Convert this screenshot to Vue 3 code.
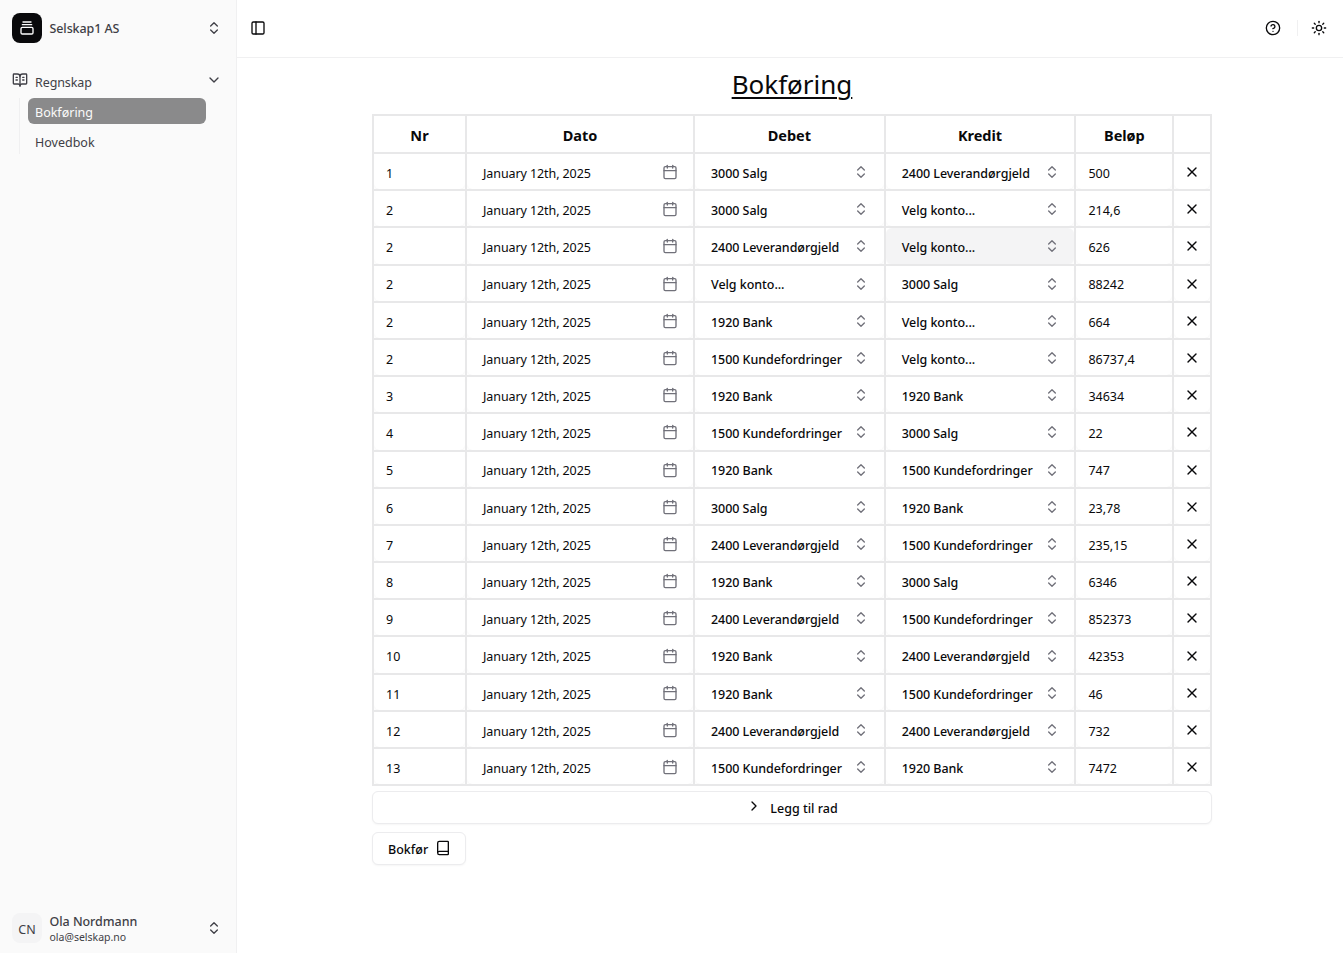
<script setup>
const accounts = {
  salg: '3000 Salg',
  lev: '2400 Leverandørgjeld',
  bank: '1920 Bank',
  kunde: '1500 Kundefordringer',
  none: 'Velg konto...'
}

const rows = [
  ['1', 'salg', 'lev', '500'],
  ['2', 'salg', 'none', '214,6'],
  ['2', 'lev', 'none', '626'],
  ['2', 'none', 'salg', '88242'],
  ['2', 'bank', 'none', '664'],
  ['2', 'kunde', 'none', '86737,4'],
  ['3', 'bank', 'bank', '34634'],
  ['4', 'kunde', 'salg', '22'],
  ['5', 'bank', 'kunde', '747'],
  ['6', 'salg', 'bank', '23,78'],
  ['7', 'lev', 'kunde', '235,15'],
  ['8', 'bank', 'salg', '6346'],
  ['9', 'lev', 'kunde', '852373'],
  ['10', 'bank', 'lev', '42353'],
  ['11', 'bank', 'kunde', '46'],
  ['12', 'lev', 'lev', '732'],
  ['13', 'kunde', 'bank', '7472']
]
</script>

<template>
  <div class="app">
    <aside class="sidebar">
      <div class="company">
        <div class="logo">
          <svg width="16" height="16" viewBox="0 0 24 24" fill="none" stroke="#fff" stroke-width="2" stroke-linecap="round" stroke-linejoin="round">
            <path d="M6 3h12" />
            <path d="M5 7h14" />
            <rect x="3" y="11" width="18" height="10" rx="2" />
          </svg>
        </div>
        <span class="company-name">Selskap1 AS</span>
        <svg class="updown dark" viewBox="0 0 24 24"><path d="m7 15 5 5 5-5" /><path d="m7 9 5-5 5 5" /></svg>
      </div>

      <div class="nav-head">
        <svg class="book-open" width="16" height="16" viewBox="0 0 24 24" fill="none" stroke="#3f3f46" stroke-width="2" stroke-linecap="round" stroke-linejoin="round">
          <path d="M12 7v14" />
          <path d="M16 12h2" />
          <path d="M16 8h2" />
          <path d="M3 18a1 1 0 0 1-1-1V4a1 1 0 0 1 1-1h5a4 4 0 0 1 4 4 4 4 0 0 1 4-4h5a1 1 0 0 1 1 1v13a1 1 0 0 1-1 1h-6a3 3 0 0 0-3 3 3 3 0 0 0-3-3z" />
          <path d="M6 12h2" />
          <path d="M6 8h2" />
        </svg>
        <span>Regnskap</span>
        <svg class="chev" width="16" height="16" viewBox="0 0 24 24" fill="none" stroke="#3f3f46" stroke-width="2" stroke-linecap="round" stroke-linejoin="round"><path d="m6 9 6 6 6-6" /></svg>
      </div>
      <div class="subnav">
        <a class="subitem active">Bokføring</a>
        <a class="subitem">Hovedbok</a>
      </div>

      <div class="user">
        <div class="avatar">CN</div>
        <div class="user-info">
          <div class="user-name">Ola Nordmann</div>
          <div class="user-mail">ola@selskap.no</div>
        </div>
        <svg class="updown dark" viewBox="0 0 24 24"><path d="m7 15 5 5 5-5" /><path d="m7 9 5-5 5 5" /></svg>
      </div>
    </aside>

    <div class="main">
      <header class="topbar">
        <svg width="16" height="16" viewBox="0 0 24 24" fill="none" stroke="#09090b" stroke-width="2" stroke-linecap="round" stroke-linejoin="round">
          <rect x="3" y="3" width="18" height="18" rx="2" />
          <path d="M9 3v18" />
        </svg>
        <div class="top-actions">
          <svg width="16" height="16" viewBox="0 0 24 24" fill="none" stroke="#09090b" stroke-width="2" stroke-linecap="round" stroke-linejoin="round">
            <circle cx="12" cy="12" r="10" />
            <path d="M9.09 9a3 3 0 0 1 5.83 1c0 2-3 3-3 3" />
            <path d="M12 17h.01" />
          </svg>
          <span class="top-sep"></span>
          <svg width="16" height="16" viewBox="0 0 24 24" fill="none" stroke="#09090b" stroke-width="2" stroke-linecap="round" stroke-linejoin="round">
            <circle cx="12" cy="12" r="4" />
            <path d="M12 2v2" /><path d="M12 20v2" />
            <path d="m4.93 4.93 1.41 1.41" /><path d="m17.66 17.66 1.41 1.41" />
            <path d="M2 12h2" /><path d="M20 12h2" />
            <path d="m6.34 17.66-1.41 1.41" /><path d="m19.07 4.93-1.41 1.41" />
          </svg>
        </div>
      </header>

      <main class="content">
        <h1 class="title">Bokføring</h1>
        <table class="ledger">
          <colgroup>
            <col class="col-nr" />
            <col class="col-date" />
            <col class="col-account" />
            <col class="col-account" />
            <col class="col-amount" />
            <col class="col-remove" />
          </colgroup>
          <thead>
            <tr>
              <th>Nr</th>
              <th>Dato</th>
              <th>Debet</th>
              <th>Kredit</th>
              <th>Beløp</th>
              <th></th>
            </tr>
          </thead>
          <tbody>
            <tr v-for="(row, i) in rows" :key="i">
              <td>
                <div class="cell plain"><span>{{ row[0] }}</span></div>
              </td>
              <td>
                <div class="cell date">
                  <span>January 12th, 2025</span>
                  <svg width="16" height="16" viewBox="0 0 24 24" fill="none" stroke="#71717a" stroke-width="2" stroke-linecap="round" stroke-linejoin="round">
                    <path d="M8 2v4" /><path d="M16 2v4" />
                    <rect x="3" y="4" width="18" height="18" rx="2" />
                    <path d="M3 10h18" />
                  </svg>
                </div>
              </td>
              <td>
                <div class="cell select">
                  <span>{{ accounts[row[1]] }}</span>
                  <svg class="updown" viewBox="0 0 24 24"><path d="m7 15 5 5 5-5" /><path d="m7 9 5-5 5 5" /></svg>
                </div>
              </td>
              <td>
                <div class="cell select" :class="{ hover: i === 2 }">
                  <span>{{ accounts[row[2]] }}</span>
                  <svg class="updown" viewBox="0 0 24 24"><path d="m7 15 5 5 5-5" /><path d="m7 9 5-5 5 5" /></svg>
                </div>
              </td>
              <td>
                <div class="cell plain"><span>{{ row[3] }}</span></div>
              </td>
              <td>
                <div class="cell remove">
                  <svg width="16" height="16" viewBox="0 0 24 24" fill="none" stroke="#09090b" stroke-width="2" stroke-linecap="round" stroke-linejoin="round">
                    <path d="M18 6 6 18" /><path d="m6 6 12 12" />
                  </svg>
                </div>
              </td>
            </tr>
          </tbody>
        </table>

        <button class="add-row">
          <svg width="16" height="16" viewBox="0 0 24 24" fill="none" stroke="#09090b" stroke-width="2" stroke-linecap="round" stroke-linejoin="round"><path d="m9 18 6-6-6-6" /></svg>
          <span>Legg til rad</span>
        </button>
        <button class="post">
          <span>Bokfør</span>
          <svg width="16" height="16" viewBox="0 0 24 24" fill="none" stroke="#09090b" stroke-width="2" stroke-linecap="round" stroke-linejoin="round">
            <path d="M4 19.5v-15A2.5 2.5 0 0 1 6.5 2H19a1 1 0 0 1 1 1v18a1 1 0 0 1-1 1H6.5a1 1 0 0 1 0-5H20" />
          </svg>
        </button>
      </main>
    </div>
  </div>
</template>

<style>
html, body {
  margin: 0;
  background: #fff;
}
</style>

<style scoped>
.app {
  display: flex;
  height: 953px;
  overflow: hidden;
  font-family: "Noto Sans", "Open Sans", sans-serif;
  font-size: 12.5px;
  color: #09090b;
}

.sidebar {
  width: 236px;
  flex-shrink: 0;
  display: flex;
  flex-direction: column;
  background: #fafafa;
  border-right: 1px solid #f0f0f1;
}

.company {
  display: flex;
  align-items: center;
  height: 30px;
  padding: 13px 14px 0 12px;
}

.logo {
  width: 30px;
  height: 30px;
  border-radius: 8px;
  background: #09090b;
  display: flex;
  align-items: center;
  justify-content: center;
}

.company-name {
  margin-left: 7.5px;
  font-weight: 500;
  color: #3f3f46;
  flex: 1;
  letter-spacing: -0.1px;
}

.updown {
  width: 16px;
  height: 16px;
  fill: none;
  stroke: #71717a;
  stroke-width: 2;
  stroke-linecap: round;
  stroke-linejoin: round;
  flex-shrink: 0;
}

.updown.dark {
  stroke: #3f3f46;
}

.nav-head {
  display: flex;
  align-items: center;
  margin-top: 27px;
  padding: 0 14px 0 12px;
  height: 24px;
  color: #3f3f46;
}

.book-open,
.chev {
  margin-top: -5px;
}

.nav-head span {
  margin-left: 7px;
  flex: 1;
  letter-spacing: -0.1px;
}

.subnav {
  margin: 4px 0 0 19px;
  padding: 0 0 0 8px;
  border-left: 1px solid #f0f0f1;
  width: 178px;
  display: flex;
  flex-direction: column;
  gap: 4px;
}

.subitem {
  display: block;
  height: 26px;
  line-height: 30px;
  padding-left: 7px;
  border-radius: 6px;
  color: #3f3f46;
}

.subitem.active {
  background: #8a8a8b;
  color: #fafafa;
}

.user {
  margin-top: auto;
  display: flex;
  align-items: center;
  padding: 0 14px 8px 12px;
}

.avatar {
  width: 30px;
  height: 30px;
  border-radius: 8px;
  background: #f4f4f5;
  color: #3f3f46;
  display: flex;
  align-items: center;
  justify-content: center;
  padding-top: 2px;
  box-sizing: border-box;
}

.user-info {
  margin-left: 7.5px;
  flex: 1;
}

.user-name {
  font-weight: 500;
  color: #3f3f46;
  line-height: 17px;
  padding-top: 2px;
  letter-spacing: -0.05px;
}

.user-mail {
  font-size: 10.5px;
  color: #3f3f46;
  line-height: 15px;
}

.main {
  flex: 1;
  min-width: 0;
}

.topbar {
  box-sizing: border-box;
  height: 58px;
  border-bottom: 1px solid #f0f0f1;
  display: flex;
  align-items: center;
  justify-content: space-between;
  padding: 0 16px 2px 13px;
}

.top-actions {
  display: flex;
  align-items: center;
}

.top-sep {
  width: 1px;
  height: 16px;
  background: #f0f0f1;
  margin: 0 13px 0 16px;
}

.content {
  width: 840px;
  margin-left: 135px;
}

.title {
  margin: 0;
  height: 56px;
  line-height: 52px;
  text-align: center;
  font-size: 26px;
  font-weight: 400;
  text-decoration: underline;
  text-underline-offset: 3px;
  text-decoration-thickness: 2px;
}

.ledger {
  width: 838.5px;
  table-layout: fixed;
  border-collapse: collapse;
  border: 2px solid #e8e8e9;
}

.col-nr { width: 93px; }
.col-date { width: 228px; }
.col-account { width: 190.7px; }
.col-amount { width: 98px; }
.col-remove { width: 38px; }

th, td {
  border: 2px solid #e8e8e9;
  padding: 0;
  height: 37.2px;
  box-sizing: border-box;
}

th {
  height: 38px;
  font-size: 14.5px;
  font-weight: 700;
  padding-top: 2px;
}

.cell {
  display: flex;
  align-items: center;
  justify-content: space-between;
  height: 35.2px;
  border-radius: 6px;
  box-shadow: 0 1px 2px rgba(0, 0, 0, 0.04);
}

.cell span {
  padding-top: 3.6px;
}

.cell svg {
  margin-top: 1px;
}

.plain {
  padding-left: 12px;
}

.date {
  padding: 0 15px 0 16px;
  letter-spacing: -0.09px;
}

.select {
  padding: 0 14.5px 0 16px;
  font-weight: 500;
  letter-spacing: -0.05px;
}

.select.hover {
  background: #f4f4f5;
}

.remove {
  justify-content: center;
  padding-right: 1px;
}

.add-row {
  display: flex;
  align-items: center;
  justify-content: center;
  gap: 8px;
  box-sizing: border-box;
  width: 840px;
  height: 33px;
  margin-top: 5px;
  background: #fff;
  border: 1px solid #ececee;
  border-radius: 6px;
  box-shadow: 0 1px 2px rgba(0, 0, 0, 0.04);
  font: inherit;
  font-weight: 500;
  color: #09090b;
  padding: 0;
}

.add-row svg {
  margin-top: -3px;
}

.add-row span {
  padding-top: 2px;
}

.post {
  display: flex;
  align-items: center;
  gap: 8px;
  box-sizing: border-box;
  height: 33px;
  width: 94px;
  margin-top: 8px;
  padding: 0 0 0 15px;
  background: #fff;
  border: 1px solid #ececee;
  border-radius: 6px;
  box-shadow: 0 1px 2px rgba(0, 0, 0, 0.04);
  font: inherit;
  font-weight: 500;
  color: #09090b;
}

.post span {
  padding-top: 2px;
}

.post svg {
  margin-top: -2px;
  margin-left: -1px;
}
</style>
